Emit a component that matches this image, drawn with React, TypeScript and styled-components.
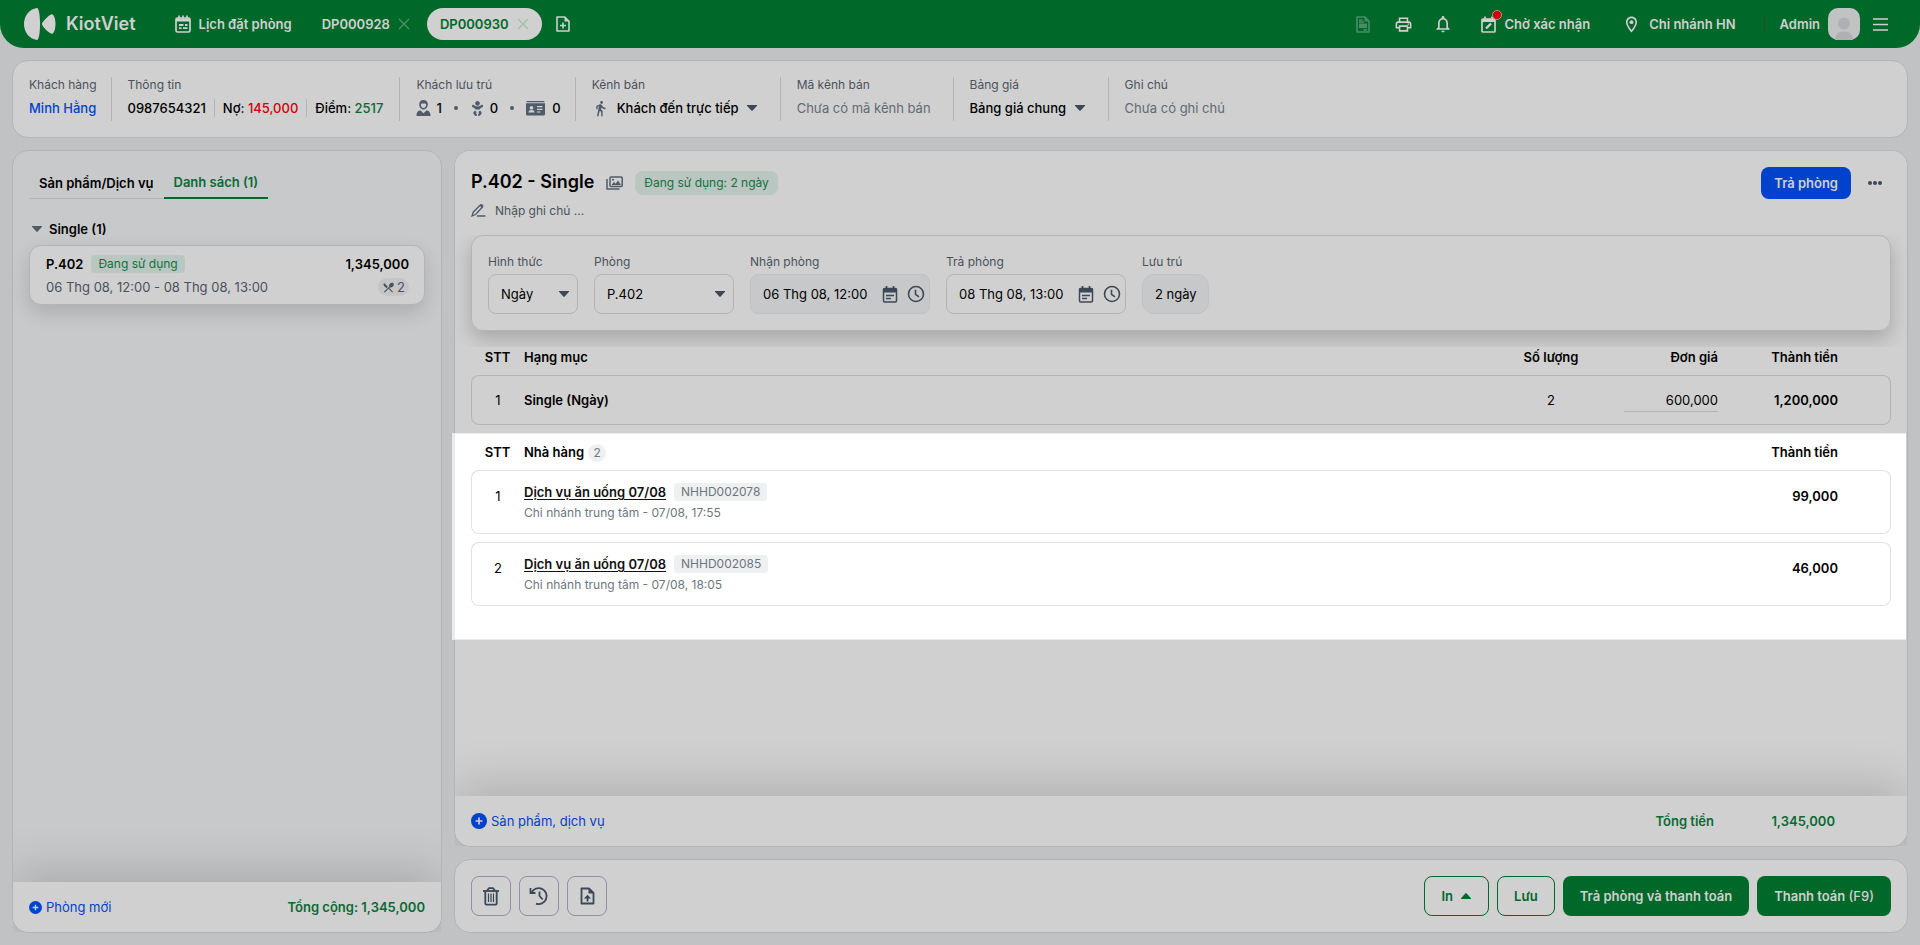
import React from "react";
import styled, { createGlobalStyle, css } from "styled-components";
import {
  MdDirectionsWalk,
  MdOutlineLocationOn,
  MdOutlineNotifications,
  MdOutlinePrint,
  MdRestaurantMenu,
} from "react-icons/md";
import { FaBaby } from "react-icons/fa";

const color = {
  page: "#c1c2c4",
  card: "#d0d0d0",
  side: "#c8c9cb",
  line: "#b3b4b7",
  green: "#006828",
  greenText: "#0a6a33",
  blue: "#0042cb",
  red: "#cf0008",
  label: "#4a525b",
  muted: "#626a73",
  icon: "#4f5b69",
  dark: "#3c4857",
};

const GlobalStyle = createGlobalStyle`
  * { box-sizing: border-box; }
  body { margin: 0; background: ${color.page}; }
  body, button, input, select {
    font-family: Inter, "Liberation Sans", sans-serif;
    font-size: 13px;
    line-height: 20px;
    color: #000;
  }
  button, input, select { margin: 0; padding: 0; border: 0; background: none; }
  svg { display: block; flex: none; }
`;

const Page = styled.div`
  min-height: 100vh;
  display: flex;
  flex-direction: column;
  gap: 12px;
  padding-bottom: 12px;
`;

/* ---------- header ---------- */

const Header = styled.header`
  height: 48px;
  display: flex;
  align-items: center;
  padding: 0 28px 0 24px;
  background: ${color.green};
  border-radius: 0 0 24px 24px;
  color: ${color.card};
`;

const Brand = styled.a`
  display: flex;
  align-items: center;
  gap: 10px;
  margin-right: 39px;
  color: inherit;
  text-decoration: none;
  font-size: 18px;
  font-weight: 600;
`;

const HeaderLink = styled.a`
  display: flex;
  align-items: center;
  gap: 8px;
  color: inherit;
  text-decoration: none;
  font-weight: 600;
`;

const BranchLink = styled(HeaderLink)`
  margin-left: 32px;
`;

const BookingTab = styled.div<{ $active?: boolean }>`
  display: flex;
  align-items: center;
  gap: 8px;
  height: 32px;
  padding: 0 13px;
  border-radius: 16px;
  background: ${(p) => (p.$active ? color.card : "transparent")};
  color: ${(p) => (p.$active ? color.green : color.card)};
`;

const TabName = styled.button`
  font-weight: 600;
  color: inherit;
`;

const TabClose = styled.button<{ $active?: boolean }>`
  color: ${(p) => (p.$active ? "#9dbfaa" : "#4b9467")};
`;

const BookingTabs = styled.nav`
  display: flex;
  align-items: center;
  gap: 4px;
  margin: 0 9px 0 17px;
`;

const IconButton = styled.button<{ $faded?: boolean }>`
  width: 24px;
  height: 24px;
  display: flex;
  align-items: center;
  justify-content: center;
  color: inherit;
  opacity: ${(p) => (p.$faded ? 0.35 : 1)};
`;

const HeaderRight = styled.div`
  margin-left: auto;
  display: flex;
  align-items: center;
`;

const HeaderTools = styled.div`
  display: flex;
  gap: 16px;
  margin-right: 26px;
`;

const Alerted = styled.span`
  position: relative;
`;

const AlertDot = styled.i`
  position: absolute;
  top: -6px;
  right: -6px;
  width: 10px;
  height: 10px;
  border-radius: 50%;
  background: ${color.red};
  border: 1px solid #c58a8a;
`;

const Account = styled.div`
  display: flex;
  align-items: center;
  gap: 8px;
  margin: 0 8px 0 28px;
  padding-left: 16px;
  font-weight: 600;
  background: linear-gradient(#1c5029, #1c5029) left center / 1px 18px no-repeat;
`;

/* ---------- shared pieces ---------- */

const Card = styled.section`
  background: ${color.card};
  border: 1px solid ${color.line};
  border-radius: 16px;
`;

const Tag = styled.span<{ $tone: "green" | "gray"; $large?: boolean }>`
  display: inline-block;
  height: ${(p) => (p.$large ? 24 : 18)}px;
  line-height: ${(p) => (p.$large ? 24 : 18)}px;
  padding: 0 ${(p) => (p.$large ? 9 : 7)}px;
  border-radius: ${(p) => (p.$large ? 8 : 4)}px;
  font-size: 12px;
  font-weight: 400;
  ${(p) =>
    p.$tone === "green"
      ? css`
          background: #bac6c0;
          color: #12703f;
        `
      : css`
          background: #eef0f2;
          color: #6d7680;
        `}
`;

const AddLink = styled.button`
  display: flex;
  align-items: center;
  gap: 4px;
  color: ${color.blue};
`;

const PanelFooter = styled.footer`
  height: 50px;
  flex: none;
  display: flex;
  align-items: center;
  justify-content: space-between;
  padding: 0 16px;
  background: ${color.card};
  border-radius: 0 0 15px 15px;
  box-shadow: 0 -10px 48px rgba(0, 0, 0, 0.17);
  clip-path: inset(-90px 0 0 0);
  color: ${color.greenText};
  font-weight: 600;
`;

/* ---------- guest information bar ---------- */

const InfoBar = styled(Card)`
  margin: 0 12px;
  height: 78px;
  display: flex;
  align-items: center;
`;

const InfoItem = styled.div<{ $end: number }>`
  height: 44px;
  padding: 0 ${(p) => p.$end}px 0 16px;
  border-right: 1px solid ${color.line};
  display: flex;
  flex-direction: column;
  gap: 7px;
  color: ${color.muted};
  &:last-child {
    border-right: 0;
  }
`;

const InfoLabel = styled.label`
  font-size: 12px;
  line-height: 15px;
  color: ${color.label};
`;

const InfoValue = styled.div`
  display: flex;
  align-items: center;
  line-height: 18px;
`;

const GuestLink = styled.a`
  color: ${color.blue};
  font-weight: 500;
  text-decoration: none;
`;

const Fact = styled.span`
  color: #000;
  font-weight: 500;
  & + & {
    margin-left: 8px;
    padding-left: 8px;
    border-left: 1px solid ${color.line};
  }
`;

const Amount = styled.span<{ $tone: string }>`
  color: ${(p) => p.$tone};
`;

const GuestCount = styled.span<{ $gap?: number }>`
  display: flex;
  align-items: center;
  gap: ${(p) => p.$gap ?? 5}px;
  color: #000;
  font-weight: 500;
  svg {
    color: ${color.icon};
  }
`;

const Bullet = styled.i`
  width: 4px;
  height: 4px;
  margin: 0 12px;
  border-radius: 50%;
  background: ${color.icon};
`;

const PlainSelect = styled.select`
  appearance: none;
  margin-right: 7px;
  font-weight: 500;
  line-height: 18px;
`;

const CaretBox = styled.span<{ $end?: number }>`
  pointer-events: none;
  padding-right: ${(p) => p.$end ?? 0}px;
  color: ${color.dark};
`;

const LeadIcon = styled.span`
  margin-right: 8px;
  color: ${color.icon};
`;

/* ---------- main area ---------- */

const Main = styled.main`
  flex: 1;
  display: flex;
  gap: 12px;
  margin: 0 12px;
`;

const Side = styled(Card)`
  flex: 0 0 430px;
  display: flex;
  flex-direction: column;
  background: ${color.side};
`;

const SideBody = styled.div`
  flex: 1;
  padding: 16px 16px 0;
`;

const Tabs = styled.div`
  display: flex;
  margin-bottom: 20px;
`;

const Tab = styled.button<{ $active?: boolean }>`
  height: 32px;
  padding: 0 10px;
  font-weight: 600;
  color: ${(p) => (p.$active ? color.greenText : "#000")};
  border-bottom: ${(p) => (p.$active ? `2px solid ${color.green}` : `1px solid ${color.line}`)};
`;

const GroupHead = styled.button`
  display: flex;
  align-items: center;
  gap: 6px;
  padding-left: 2px;
  font-weight: 600;
  svg {
    color: ${color.icon};
  }
`;

const RoomCard = styled.article`
  margin-top: 6px;
  padding: 7px 15px 4px 16px;
  height: 60px;
  background: ${color.card};
  border: 1px solid ${color.line};
  border-radius: 12px;
  box-shadow: 0 8px 20px rgba(0, 0, 0, 0.14);
`;

const RoomLine = styled.div<{ $strong?: boolean }>`
  display: flex;
  align-items: center;
  height: ${(p) => (p.$strong ? 22 : 24)}px;
  gap: 8px;
  font-weight: ${(p) => (p.$strong ? 600 : 400)};
  color: ${(p) => (p.$strong ? "#000" : color.label)};
  > :last-child {
    margin-left: auto;
  }
`;

const MealCount = styled.span`
  display: flex;
  align-items: center;
  gap: 2px;
  height: 18px;
  padding: 0 4px;
  border-radius: 9px;
  background: #c4c5c7;
  color: ${color.label};
`;

const Content = styled.div`
  flex: 1;
  min-width: 0;
  display: flex;
  flex-direction: column;
  gap: 12px;
`;

const RoomPanel = styled(Card)`
  flex: 1;
  display: flex;
  flex-direction: column;
`;

const RoomHead = styled.div`
  position: relative;
  z-index: 1;
  padding: 16px 16px 12px;
  background: ${color.card};
  border-radius: 15px 15px 0 0;
`;

const TitleRow = styled.div`
  display: flex;
  align-items: center;
  height: 32px;
  gap: 12px;
  color: ${color.icon};
`;

const Title = styled.h1`
  margin: 0;
  padding-bottom: 2px;
  font-size: 18px;
  line-height: 28px;
  font-weight: 600;
  color: #000;
`;

const Note = styled.label`
  display: flex;
  align-items: center;
  gap: 9px;
  height: 24px;
  color: ${color.icon};
`;

const NoteInput = styled.input`
  width: 240px;
  font-size: 12px;
  outline: 0;
  &::placeholder {
    color: ${color.label};
    opacity: 1;
  }
`;

const Button = styled.button<{ $kind: "blue" | "green" | "outline" | "icon" }>`
  display: flex;
  align-items: center;
  justify-content: center;
  gap: 7px;
  height: ${(p) => (p.$kind === "blue" ? 32 : 40)}px;
  padding: 0 ${(p) => (p.$kind === "blue" ? 13 : 17)}px;
  border-radius: 8px;
  font-weight: 600;
  color: ${color.card};
  background: ${(p) => (p.$kind === "blue" ? color.blue : color.green)};
  ${(p) =>
    p.$kind === "outline" &&
    css`
      padding: 0 16px;
      background: none;
      border: 1px solid ${color.green};
      color: ${color.green};
    `}
  ${(p) =>
    p.$kind === "icon" &&
    css`
      width: 40px;
      padding: 0;
      background: none;
      border: 1px solid #8d929b;
      color: ${color.dark};
    `}
`;

const Light = styled.span`
  font-weight: 500;
`;

const ButtonLabel = styled.span``;

const HeadActions = styled.div`
  margin: 0 4px 0 auto;
  display: flex;
  align-items: center;
  gap: 12px;
`;

const StayForm = styled.form`
  display: flex;
  gap: 16px;
  height: 96px;
  margin: 0 16px;
  padding: 16px;
  border: 1px solid ${color.line};
  border-radius: 12px;
  box-shadow: 0 8px 20px rgba(0, 0, 0, 0.2);
`;

const Field = styled.div<{ $width: number }>`
  width: ${(p) => p.$width}px;
  display: flex;
  flex-direction: column;
  gap: 2px;
`;

const FieldLabel = styled.label`
  font-size: 12px;
  color: ${color.label};
`;

const Control = styled.div<{ $filled?: boolean; $round?: boolean }>`
  height: 40px;
  display: flex;
  align-items: center;
  gap: 2px;
  padding: 0 1px 0 12px;
  border: 1px solid ${(p) => (p.$filled ? "#c0c2c5" : color.line)};
  border-radius: ${(p) => (p.$round ? 12 : 8)}px;
  background: ${(p) => (p.$filled ? "#c6c8ca" : "transparent")};
  color: ${color.dark};
`;

const FieldInput = styled.input`
  flex: 1;
  min-width: 0;
  outline: 0;
`;

const FieldSelect = styled.select`
  appearance: none;
  flex: 1;
  min-width: 0;
`;

const Items = styled.div`
  position: relative;
  flex: 1;
  margin-top: 16px;
  padding: 0 16px;
  background: ${color.card};
`;

const ItemTable = styled.table<{ $lead?: boolean }>`
  width: 100%;
  table-layout: fixed;
  border-collapse: separate;
  border-spacing: 0 8px;
  margin-top: ${(p) => (p.$lead ? -8 : 0)}px;
`;

const Col = styled.col<{ $w?: number }>`
  width: ${(p) => (p.$w ? `${p.$w}px` : "auto")};
`;

type Align = { $align?: "left" | "center" | "right" };

const cell = css<Align>`
  padding: 0;
  height: 20px;
  text-align: ${(p) => p.$align ?? "left"};
`;

const Th = styled.th<Align>`
  ${cell}
  font-weight: 600;
`;

const Td = styled.td<Align & { $strong?: boolean }>`
  ${cell}
  font-weight: ${(p) => (p.$strong ? 600 : 400)};
`;

const ItemRow = styled.tr<{ $service?: boolean }>`
  > td {
    height: ${(p) => (p.$service ? 64 : 50)}px;
    padding-top: ${(p) => (p.$service ? 12 : 0)}px;
    vertical-align: ${(p) => (p.$service ? "top" : "middle")};
    line-height: ${(p) => (p.$service ? 26 : 20)}px;
    border: 1px solid ${(p) => (p.$service ? "#dfe1e3" : color.line)};
    border-left-width: 0;
    border-right-width: 0;
  }
  > td:first-child {
    border-left-width: 1px;
    border-radius: 8px 0 0 8px;
  }
  > td:last-child {
    border-right-width: 1px;
    border-radius: 0 8px 8px 0;
  }
`;

const PriceInput = styled.input`
  width: 94px;
  height: 23px;
  text-align: right;
  border-bottom: 1px solid ${color.line};
`;

/* The restaurant section is lit up above the dimmed page. */
const Spotlight = styled.div`
  margin: 0 -15px 0 -19px;
  padding: 0 15px 25px 16px;
  background: #fff;
  border: solid #ebebee;
  border-width: 1px 0 1px 3px;
`;

const Count = styled.span`
  display: inline-block;
  margin-left: 4px;
  width: 18px;
  height: 18px;
  line-height: 18px;
  border-radius: 9px;
  background: #eef0f2;
  color: #6d7680;
  text-align: center;
  font-size: 12px;
  font-weight: 400;
`;

const ServiceTitle = styled.div`
  display: flex;
  align-items: center;
  gap: 8px;
  height: 18px;
  line-height: 18px;
`;

const ServiceLink = styled.a`
  color: #111;
  font-weight: 600;
  text-underline-offset: 2px;
`;

const ServiceMeta = styled.div`
  margin-top: 2px;
  font-size: 12px;
  line-height: 20px;
  color: #6d7680;
`;

const Total = styled.dl`
  margin: 0;
  padding-right: 56px;
  display: flex;
`;

const TotalName = styled.dt``;

const TotalValue = styled.dd`
  margin: 0;
  width: 121px;
  text-align: right;
`;

const ActionBar = styled(Card)`
  display: flex;
  gap: 8px;
  padding: 16px;
`;

const Spacer = styled.div`
  flex: 1;
`;

/* ---------- drawings ---------- */

const Logo = () => (
  <svg width="32" height="32" viewBox="0 0 32 32" fill="currentColor">
    <path d="M13 0C5 1 0 8 0 16s5 15 13 16c1.600 0 3-6 3-16S14.600 0 13 0Z" />
    <path d="M27.500 6.200C24 7.500 18 14 18 16s6 8.500 9.500 9.800c2 .7 4-4 4-9.800s-2-10.500-4-9.800Z" />
  </svg>
);

const Caret = ({ up }: { up?: boolean }) => (
  <svg width="12" height="8" viewBox="0 0 12 8" fill="currentColor">
    {up ? (
      <path d="M1 7v-.8L5.300 1.400q.7-.8 1.400 0L11 6.200V7Z" />
    ) : (
      <path d="M1 1h10v.8L6.700 6.600q-.7.700-1.400 0L1 1.800Z" />
    )}
  </svg>
);

const Cross = () => (
  <svg width="12" height="12" viewBox="0 0 12 12" stroke="currentColor" strokeWidth="1.200">
    <path d="M1 1l10 10M11 1 1 11" />
  </svg>
);

const HeaderCalendar = () => (
  <svg width="16" height="18" viewBox="0 0 16 18" fill="none" stroke="currentColor" strokeWidth="1.700">
    <rect x="1" y="3" width="14" height="14" rx="1.500" />
    <path d="M1 5h14" strokeWidth="3" />
    <path d="M4 .5v3M8 .5v3M12 .5v3" />
    <path d="M4 10h4.500M10 10h2.500M4 13.200h2.500M8 13.200h4.500" strokeWidth="1.800" />
  </svg>
);

const FilePlus = () => (
  <svg width="14" height="16" viewBox="0 0 14 16" fill="none" stroke="currentColor" strokeWidth="1.600">
    <path d="M1 1h7.800L13 5.200V15H1Z" strokeLinejoin="round" />
    <path d="M8.500 1v4.500H13Z" fill="currentColor" stroke="none" />
    <path d="M7 6.500v6M4 9.500h6" />
  </svg>
);

const FileUp = () => (
  <svg width="15" height="18" viewBox="0 0 15 18" fill="none" stroke="currentColor" strokeWidth="1.800">
    <path d="M1.500 1.500h7.500l4.500 4.500v10.500h-12Z" strokeLinejoin="round" />
    <path d="M8.500 1v5.500H14Z" fill="currentColor" stroke="none" />
    <path d="M7.500 14.500V10" />
    <path d="M4 11.500 7.500 7.800 11 11.500Z" fill="currentColor" stroke="none" />
  </svg>
);

const FileText = () => (
  <svg width="14" height="17" viewBox="0 0 14 17" fill="none" stroke="currentColor" strokeWidth="1.600">
    <path d="M1 1h8l4 4v11H1Z" strokeLinejoin="round" />
    <path d="M3 4h3.500M3 6h5M7.500 14H11" strokeWidth="1.300" />
    <path d="M3 7.500h8V12H3Z" fill="currentColor" stroke="none" />
    <path d="M8.500 1v4.500H13Z" fill="currentColor" stroke="none" />
  </svg>
);

const CalendarEdit = () => (
  <svg width="15" height="17" viewBox="0 0 15 17" fill="none" stroke="currentColor" strokeWidth="1.700">
    <rect x="1" y="3" width="13" height="13" rx="1" />
    <path d="M1 4.500h13" strokeWidth="3" />
    <path d="M4 .5v3M11 .5v3" />
    <path d="m5 12.500 5-5" strokeWidth="2.400" />
  </svg>
);

const MenuLines = () => (
  <svg width="15" height="13" viewBox="0 0 15 13" stroke="currentColor" strokeWidth="1.600">
    <path d="M0 1h15M0 6.500h15M0 12h15" />
  </svg>
);

const DateIcon = () => (
  <svg width="16" height="17" viewBox="0 0 16 17" fill="none" stroke="currentColor" strokeWidth="1.500">
    <rect x="1.500" y="2.500" width="13" height="13.500" rx="1.200" />
    <path d="M1 2.500h14v4H1Z" fill="currentColor" stroke="none" />
    <path d="M4.500 0v3M11.500 0v3" strokeWidth="1.700" />
    <path d="M4 9.500h8M4 12.500h5" />
  </svg>
);

const ClockIcon = () => (
  <svg width="18" height="18" viewBox="0 0 18 18" fill="none" stroke="currentColor" strokeWidth="1.600">
    <circle cx="9" cy="9" r="7.500" />
    <path d="M8.500 4.800v4.500l3.500 2.500" />
  </svg>
);

const HistoryIcon = () => (
  <svg width="20" height="20" viewBox="0 0 20 20" fill="none" stroke="currentColor" strokeWidth="1.800">
    <path d="M2.500 6.500A8 8 0 1 1 7 17.700" />
    <path d="M1.500 2v5h5" />
    <path d="M10.500 5.500V10l3.200 3.500" />
  </svg>
);

const Avatar = () => (
  <svg width="32" height="32" viewBox="0 0 32 32">
    <rect width="32" height="32" rx="10" fill="#c1c2c4" />
    <circle cx="16" cy="15.500" r="6" fill="#aeb0b3" />
    <path d="M7 32v-2a8 8 0 0 1 8-6.500h2A8 8 0 0 1 25 30v2Z" fill="#aeb0b3" />
  </svg>
);

const Adult = () => (
  <svg width="15" height="16" viewBox="0 0 15 16" fill="currentColor">
    <path
      fillRule="evenodd"
      d="M7.500 0a4.300 4.300 0 0 1 4.300 4.600c0 2.600-2 5-4.300 5s-4.300-2.400-4.300-5A4.300 4.300 0 0 1 7.500 0Zm0 8c1.500 0 2.700-1.600 2.700-3.500L9.500 3.500h-4l-.7 1C4.800 6.400 6 8 7.500 8Z"
    />
    <path d="M.5 16c0-3.500 1-4.800 3.800-5.800l3.200 3 3.200-3c2.800 1 3.800 2.300 3.800 5.800Z" />
  </svg>
);

const IdCard = () => (
  <svg width="19" height="15" viewBox="0 0 19 15" fill="currentColor">
    <path
      fillRule="evenodd"
      d="M1.500 0h16a1 1 0 0 1 1 1.200H.5A1 1 0 0 1 1.500 0ZM0 2.200h19V13a1.500 1.500 0 0 1-1.500 1.500h-16A1.500 1.500 0 0 1 0 13ZM5.500 5a1.800 1.800 0 1 0 .01 0ZM2.500 11.500h6c0-1.700-1-2.500-3-2.500s-3 .8-3 2.500ZM11 5v1.300h5.500V5Zm0 2.700V9h5.500V7.700Zm0 2.700v1.200h3.500v-1.200Z"
    />
  </svg>
);

const Gallery = () => (
  <svg width="17" height="14" viewBox="0 0 17 14" fill="none" stroke="currentColor" strokeWidth="1.500">
    <rect x="4" y="1" width="12.200" height="9.500" rx="1" />
    <path d="M1 3v10h12.500" />
    <path d="m5.500 9 2.500-3 1.700 1.800L12 4.500 15 9Z" fill="currentColor" stroke="none" />
    <circle cx="7" cy="3.700" r="1" fill="currentColor" stroke="none" />
  </svg>
);

const Pencil = () => (
  <svg width="15" height="14" viewBox="0 0 15 14" fill="none" stroke="currentColor" strokeWidth="1.300">
    <path d="m1 12 1.200-3.800 6.600-6.700q1-.9 2 0t.2 2L4.600 10.500Z" />
    <path d="m8.500 1.200 1.200-.9q1.500-.5 2.300.6t0 2l-1 1.300Z" fill="currentColor" stroke="none" />
    <path d="M6 12h8.500" strokeWidth="1.500" />
  </svg>
);

const PlusCircle = ({ size }: { size: number }) => (
  <svg width={size} height={size} viewBox="0 0 16 16">
    <circle cx="8" cy="8" r="8" fill={color.blue} />
    <path d="M8 4.500v7M4.500 8h7" stroke={color.card} strokeWidth="1.700" />
  </svg>
);

const Trash = () => (
  <svg width="16" height="19" viewBox="0 0 16 19" fill="none" stroke="currentColor" strokeWidth="1.800">
    <path d="M0 4h16" />
    <path d="M4.500 4V3L6 1.200h4L11.500 3v1" />
    <path d="M2.300 4v12.500q0 1.200 1.200 1.200h9q1.200 0 1.200-1.200V4" />
    <path d="M5.500 6.500V15M8 6.500V15M10.500 6.500V15" strokeWidth="1.200" />
  </svg>
);

const Dots = () => (
  <svg width="16" height="6" viewBox="0 0 16 6" fill={color.dark}>
    <circle cx="3" cy="3" r="2" />
    <circle cx="8" cy="3" r="2" />
    <circle cx="13" cy="3" r="2" />
  </svg>
);

/* ---------- data ---------- */

const bookings = [
  { code: "DP000928", active: false },
  { code: "DP000930", active: true },
];

const services = [
  { name: "Dịch vụ ăn uống 07/08", code: "NHHD002078", time: "07/08, 17:55", amount: "99,000" },
  { name: "Dịch vụ ăn uống 07/08", code: "NHHD002085", time: "07/08, 18:05", amount: "46,000" },
];

type DateFieldProps = { id: string; label: string; value: string; filled?: boolean };

const DateField = ({ id, label, value, filled }: DateFieldProps) => (
  <Field $width={180}>
    <FieldLabel htmlFor={id}>{label}</FieldLabel>
    <Control $filled={filled}>
      <FieldInput id={id} defaultValue={value} readOnly={filled} />
      <IconButton type="button" aria-label="Chọn ngày"><DateIcon /></IconButton>
      <IconButton type="button" aria-label="Chọn giờ"><ClockIcon /></IconButton>
    </Control>
  </Field>
);

const SelectField = ({ id, label, value, width }: { id: string; label: string; value: string; width: number }) => (
  <Field $width={width}>
    <FieldLabel htmlFor={id}>{label}</FieldLabel>
    <Control>
      <FieldSelect id={id}><option>{value}</option></FieldSelect>
      <CaretBox $end={6}><Caret /></CaretBox>
    </Control>
  </Field>
);

const Columns = () => (
  <colgroup>
    <Col $w={53} />
    <Col />
    <Col $w={120} />
    <Col $w={107} />
    <Col $w={120} />
    <Col $w={53} />
  </colgroup>
);

export default function App() {
  return (
    <Page>
      <GlobalStyle />
      <Header>
        <Brand href="#"><Logo />KiotViet</Brand>
        <HeaderLink href="#"><HeaderCalendar />Lịch đặt phòng</HeaderLink>
        <BookingTabs>
          {bookings.map((b) => (
            <BookingTab key={b.code} $active={b.active}>
              <TabName>{b.code}</TabName>
              <TabClose $active={b.active} aria-label="Đóng"><Cross /></TabClose>
            </BookingTab>
          ))}
        </BookingTabs>
        <IconButton aria-label="Thêm"><FilePlus /></IconButton>
        <HeaderRight>
          <HeaderTools>
            <IconButton aria-label="Hóa đơn" $faded><FileText /></IconButton>
            <IconButton aria-label="In"><MdOutlinePrint size={19} /></IconButton>
            <IconButton aria-label="Thông báo"><MdOutlineNotifications size={20} /></IconButton>
          </HeaderTools>
          <HeaderLink href="#">
            <Alerted><CalendarEdit /><AlertDot /></Alerted>
            Chờ xác nhận
          </HeaderLink>
          <BranchLink href="#"><MdOutlineLocationOn size={19} />Chi nhánh HN</BranchLink>
          <Account>Admin<Avatar /></Account>
          <IconButton aria-label="Menu"><MenuLines /></IconButton>
        </HeaderRight>
      </Header>

      <InfoBar>
        <InfoItem $end={14}>
          <InfoLabel as="span">Khách hàng</InfoLabel>
          <InfoValue><GuestLink href="#">Minh Hằng</GuestLink></InfoValue>
        </InfoItem>
        <InfoItem $end={16}>
          <InfoLabel as="span">Thông tin</InfoLabel>
          <InfoValue>
            <Fact>0987654321</Fact>
            <Fact>Nợ: <Amount $tone={color.red}>145,000</Amount></Fact>
            <Fact>Điểm: <Amount $tone={color.greenText}>2517</Amount></Fact>
          </InfoValue>
        </InfoItem>
        <InfoItem $end={14}>
          <InfoLabel as="span">Khách lưu trú</InfoLabel>
          <InfoValue>
            <GuestCount><Adult />1</GuestCount>
            <Bullet />
            <GuestCount><FaBaby size={15} />0</GuestCount>
            <Bullet />
            <GuestCount $gap={7}><IdCard />0</GuestCount>
          </InfoValue>
        </InfoItem>
        <InfoItem $end={22}>
          <InfoLabel htmlFor="channel">Kênh bán</InfoLabel>
          <InfoValue>
            <LeadIcon><MdDirectionsWalk size={17} /></LeadIcon>
            <PlainSelect id="channel"><option>Khách đến trực tiếp</option></PlainSelect>
            <CaretBox><Caret /></CaretBox>
          </InfoValue>
        </InfoItem>
        <InfoItem $end={22}>
          <InfoLabel as="span">Mã kênh bán</InfoLabel>
          <InfoValue>Chưa có mã kênh bán</InfoValue>
        </InfoItem>
        <InfoItem $end={22}>
          <InfoLabel htmlFor="pricebook">Bảng giá</InfoLabel>
          <InfoValue>
            <PlainSelect id="pricebook"><option>Bảng giá chung</option></PlainSelect>
            <CaretBox><Caret /></CaretBox>
          </InfoValue>
        </InfoItem>
        <InfoItem $end={22}>
          <InfoLabel as="span">Ghi chú</InfoLabel>
          <InfoValue>Chưa có ghi chú</InfoValue>
        </InfoItem>
      </InfoBar>

      <Main>
        <Side>
          <SideBody>
            <Tabs role="tablist">
              <Tab role="tab" aria-selected={false}>Sản phẩm/Dịch vụ</Tab>
              <Tab role="tab" aria-selected $active>Danh sách (1)</Tab>
            </Tabs>
            <GroupHead aria-expanded><Caret />Single (1)</GroupHead>
            <RoomCard>
              <RoomLine $strong>P.402<Tag $tone="green">Đang sử dụng</Tag><span>1,345,000</span></RoomLine>
              <RoomLine>
                06 Thg 08, 12:00 - 08 Thg 08, 13:00
                <MealCount><MdRestaurantMenu size={13} />2</MealCount>
              </RoomLine>
            </RoomCard>
          </SideBody>
          <PanelFooter>
            <AddLink><PlusCircle size={13} />Phòng mới</AddLink>
            <span>Tổng cộng: 1,345,000</span>
          </PanelFooter>
        </Side>

        <Content>
          <RoomPanel>
            <RoomHead>
              <TitleRow>
                <Title>P.402 - Single</Title>
                <Gallery />
                <Tag $tone="green" $large>Đang sử dụng: 2 ngày</Tag>
                <HeadActions>
                  <Button $kind="blue">Trả phòng</Button>
                  <IconButton aria-label="Thêm thao tác"><Dots /></IconButton>
                </HeadActions>
              </TitleRow>
              <Note><Pencil /><NoteInput placeholder="Nhập ghi chú ..." aria-label="Ghi chú" /></Note>
            </RoomHead>

            <StayForm>
              <SelectField id="mode" label="Hình thức" value="Ngày" width={90} />
              <SelectField id="room" label="Phòng" value="P.402" width={140} />
              <DateField id="checkin" label="Nhận phòng" value="06 Thg 08, 12:00" filled />
              <DateField id="checkout" label="Trả phòng" value="08 Thg 08, 13:00" />
              <Field $width={67}>
                <FieldLabel htmlFor="stay">Lưu trú</FieldLabel>
                <Control $filled $round><FieldInput id="stay" defaultValue="2 ngày" readOnly /></Control>
              </Field>
            </StayForm>

            <Items>
              <ItemTable $lead>
                <Columns />
                <thead>
                  <tr>
                    <Th $align="center">STT</Th>
                    <Th>Hạng mục</Th>
                    <Th $align="center">Số lượng</Th>
                    <Th $align="right">Đơn giá</Th>
                    <Th $align="right">Thành tiền</Th>
                    <Th />
                  </tr>
                </thead>
                <tbody>
                  <ItemRow>
                    <Td $align="center">1</Td>
                    <Td $strong>Single (Ngày)</Td>
                    <Td $align="center">2</Td>
                    <Td $align="right"><PriceInput defaultValue="600,000" aria-label="Đơn giá" /></Td>
                    <Td $align="right" $strong>1,200,000</Td>
                    <Td />
                  </ItemRow>
                </tbody>
              </ItemTable>

              <Spotlight>
                <ItemTable>
                  <Columns />
                  <thead>
                    <tr>
                      <Th $align="center">STT</Th>
                      <Th colSpan={3}>Nhà hàng<Count>2</Count></Th>
                      <Th $align="right">Thành tiền</Th>
                      <Th />
                    </tr>
                  </thead>
                  <tbody>
                    {services.map((s, i) => (
                      <ItemRow key={s.code} $service>
                        <Td $align="center">{i + 1}</Td>
                        <Td colSpan={3}>
                          <ServiceTitle>
                            <ServiceLink href="#">{s.name}</ServiceLink>
                            <Tag $tone="gray">{s.code}</Tag>
                          </ServiceTitle>
                          <ServiceMeta>Chi nhánh trung tâm - {s.time}</ServiceMeta>
                        </Td>
                        <Td $align="right" $strong>{s.amount}</Td>
                        <Td />
                      </ItemRow>
                    ))}
                  </tbody>
                </ItemTable>
              </Spotlight>
            </Items>

            <PanelFooter>
              <AddLink><PlusCircle size={16} />Sản phẩm, dịch vụ</AddLink>
              <Total>
                <TotalName>Tổng tiền</TotalName>
                <TotalValue>1,345,000</TotalValue>
              </Total>
            </PanelFooter>
          </RoomPanel>

          <ActionBar>
            <Button $kind="icon" aria-label="Xóa"><Trash /></Button>
            <Button $kind="icon" aria-label="Lịch sử"><HistoryIcon /></Button>
            <Button $kind="icon" aria-label="Tải tệp lên"><FileUp /></Button>
            <Spacer />
            <Button $kind="outline">In<Caret up /></Button>
            <Button $kind="outline">Lưu</Button>
            <Button $kind="green">Trả phòng và thanh toán</Button>
            <Button $kind="green"><ButtonLabel>Thanh toán <Light>(F9)</Light></ButtonLabel></Button>
          </ActionBar>
        </Content>
      </Main>
    </Page>
  );
}
